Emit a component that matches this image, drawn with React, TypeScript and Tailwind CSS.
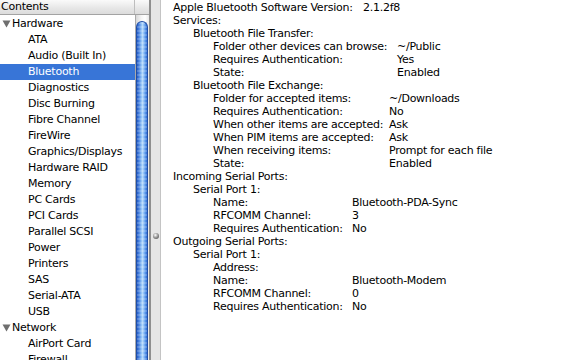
type Line = { k: string; v?: string; lvl: 0 | 1 | 2; kw?: string }

const lines: Line[] = [
  { k: "Apple Bluetooth Software Version:", v: "2.1.2f8", lvl: 0, kw: "w-[190px]" },
  { k: "Services:", lvl: 0 },
  { k: "Bluetooth File Transfer:", lvl: 1 },
  { k: "Folder other devices can browse:", v: "~/Public", lvl: 2, kw: "w-[184px]" },
  { k: "Requires Authentication:", v: "Yes", lvl: 2, kw: "w-[184px]" },
  { k: "State:", v: "Enabled", lvl: 2, kw: "w-[184px]" },
  { k: "Bluetooth File Exchange:", lvl: 1 },
  { k: "Folder for accepted items:", v: "~/Downloads", lvl: 2, kw: "w-[176px]" },
  { k: "Requires Authentication:", v: "No", lvl: 2, kw: "w-[176px]" },
  { k: "When other items are accepted:", v: "Ask", lvl: 2, kw: "w-[176px]" },
  { k: "When PIM items are accepted:", v: "Ask", lvl: 2, kw: "w-[176px]" },
  { k: "When receiving items:", v: "Prompt for each file", lvl: 2, kw: "w-[176px]" },
  { k: "State:", v: "Enabled", lvl: 2, kw: "w-[176px]" },
  { k: "Incoming Serial Ports:", lvl: 0 },
  { k: "Serial Port 1:", lvl: 1 },
  { k: "Name:", v: "Bluetooth-PDA-Sync", lvl: 2, kw: "w-[139px]" },
  { k: "RFCOMM Channel:", v: "3", lvl: 2, kw: "w-[139px]" },
  { k: "Requires Authentication:", v: "No", lvl: 2, kw: "w-[139px]" },
  { k: "Outgoing Serial Ports:", lvl: 0 },
  { k: "Serial Port 1:", lvl: 1 },
  { k: "Address:", lvl: 2 },
  { k: "Name:", v: "Bluetooth-Modem", lvl: 2, kw: "w-[139px]" },
  { k: "RFCOMM Channel:", v: "0", lvl: 2, kw: "w-[139px]" },
  { k: "Requires Authentication:", v: "No", lvl: 2, kw: "w-[139px]" },
]

const sidebar: { label: string; group?: boolean }[] = [
  { label: "Hardware", group: true },
  { label: "ATA" },
  { label: "Audio (Built In)" },
  { label: "Bluetooth" },
  { label: "Diagnostics" },
  { label: "Disc Burning" },
  { label: "Fibre Channel" },
  { label: "FireWire" },
  { label: "Graphics/Displays" },
  { label: "Hardware RAID" },
  { label: "Memory" },
  { label: "PC Cards" },
  { label: "PCI Cards" },
  { label: "Parallel SCSI" },
  { label: "Power" },
  { label: "Printers" },
  { label: "SAS" },
  { label: "Serial-ATA" },
  { label: "USB" },
  { label: "Network", group: true },
  { label: "AirPort Card" },
  { label: "Firewall" },
]

const indent = ["", "ml-[20px]", "ml-[40px]"]

function Disclosure() {
  return (
    <svg width="9" height="8" viewBox="0 0 9 8" className="shrink-0">
      <polygon points="0.5,0.5 8.5,0.5 4.5,7.5" fill="#6f6f6f" />
    </svg>
  )
}

export default function App() {
  return (
    <div className="flex h-[360px] w-[575px] overflow-hidden bg-white font-['DejaVu_Sans',sans-serif] text-[11px] tracking-[-0.25px] text-black">
      {/* source list */}
      <div className="flex w-[149px] shrink-0 flex-col">
        <div className="flex h-[15px] shrink-0 border-b border-[#a3a3a3] bg-[linear-gradient(#fafafa,#e6e6e6_60%,#dcdcdc)]">
          <div className="w-[135px] border-r border-[#bdbdbd] pl-px leading-[14px]">Contents</div>
          <div className="flex-1" />
        </div>
        <div className="flex min-h-0 flex-1">
          <div className="w-[135px] pt-px">
            {sidebar.map((s) =>
              s.group ? (
                <div key={s.label} className="flex h-[16px] items-center gap-[1px] pl-[2px] leading-[16px]">
                  <Disclosure />
                  <span>{s.label}</span>
                </div>
              ) : (
                <div
                  key={s.label}
                  className={
                    s.label === "Bluetooth"
                      ? "h-[16px] bg-[#3875d7] pl-[28px] leading-[16px] text-white"
                      : "h-[16px] pl-[28px] leading-[16px]"
                  }
                >
                  {s.label}
                </div>
              )
            )}
          </div>
          <div className="flex w-[14px] flex-col border-l border-[#a9a9a9] bg-[linear-gradient(90deg,#d8d8d8,#f4f4f4_40%,#ffffff_70%,#e8e8e8)] pt-[6px]">
            <div className="w-[12px] flex-1 rounded-t-full border border-b-0 border-[#1f4fa8] bg-[repeating-linear-gradient(0deg,rgba(255,255,255,0.18)_0px,rgba(255,255,255,0.18)_2px,transparent_2px,transparent_4px),linear-gradient(90deg,#2459c2,#4d88e3_22%,#9ccaf9_48%,#b6dafc_56%,#63a0ee_80%,#2d67d0)]" />
          </div>
        </div>
      </div>

      {/* splitter */}
      <div className="w-[2px] shrink-0 bg-[#8f8f8f]" />
      <div className="flex w-[10px] shrink-0 flex-col items-center border-r border-[#c4c4c4] bg-[#e6e6e6]">
        <div className="mt-[233px] h-[6px] w-[6px] rounded-full bg-[radial-gradient(circle_at_40%_35%,#ffffff_0%,#9a9a9a_45%,#3a3a3a_100%)]" />
      </div>

      {/* detail */}
      <div className="flex-1 pl-[12px] pt-px">
        {lines.map((l, i) => (
          <div key={i} className={`flex h-[13px] whitespace-nowrap leading-[13px] ${indent[l.lvl]}`}>
            <span className={l.kw ? `shrink-0 ${l.kw}` : ""}>{l.k}</span>
            {l.v && <span>{l.v}</span>}
          </div>
        ))}
      </div>
    </div>
  )
}
